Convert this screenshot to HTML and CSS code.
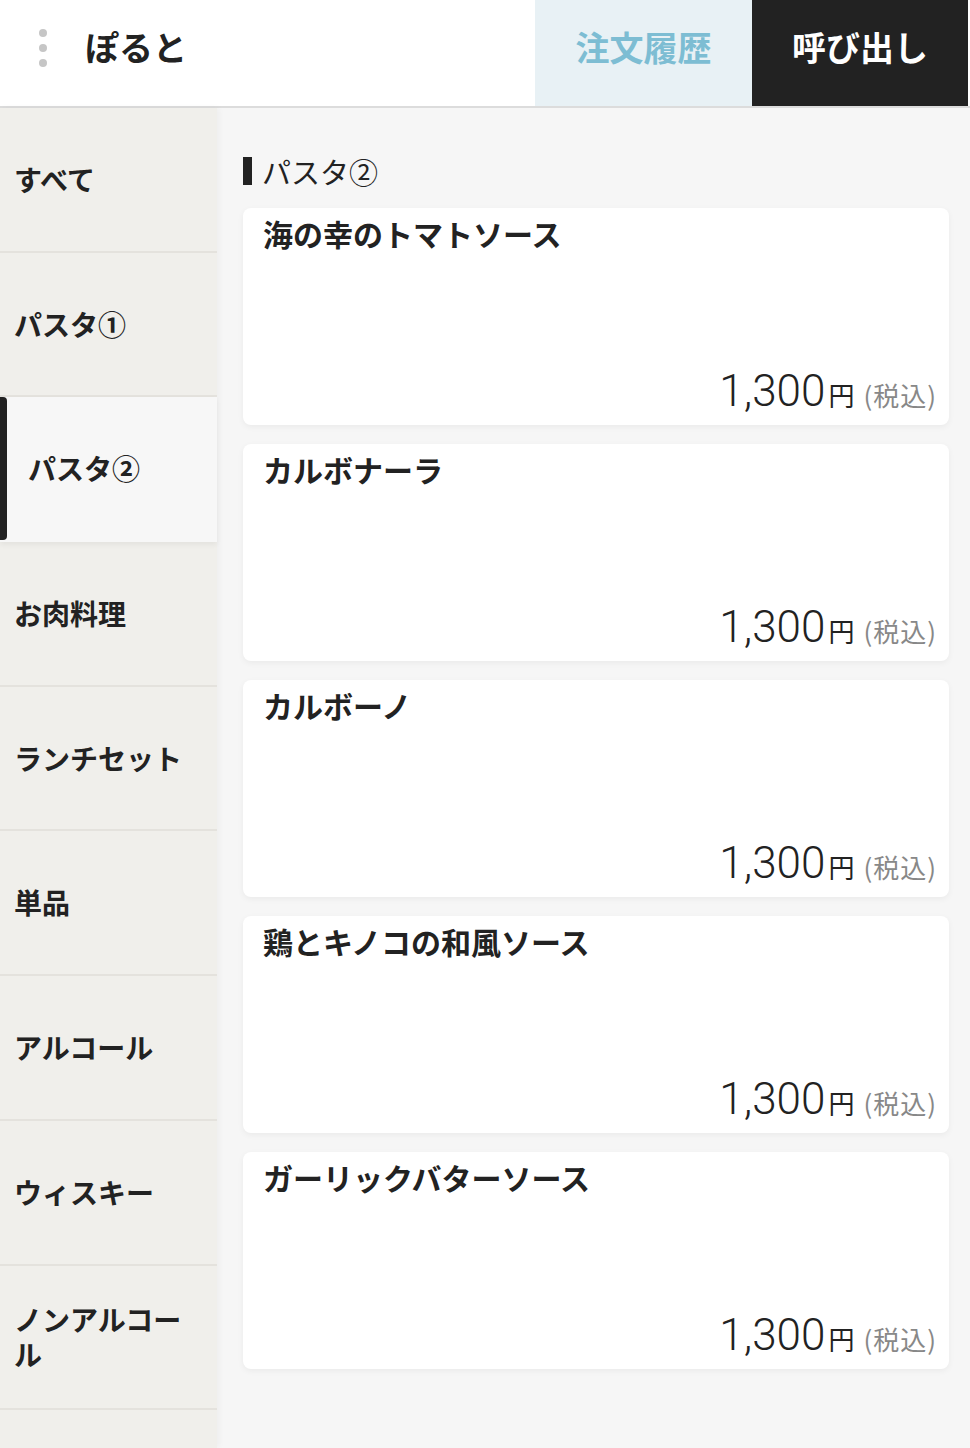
FILE: index.html
```html
<!DOCTYPE html>
<html lang="ja">
<head>
    <meta charset="UTF-8">
    <title>ぽると</title>
    <link rel="stylesheet" href="styles.css">
</head>
<body>
<div class="header">
    <div class="brand">
        <span class="dots"><i></i><i></i><i></i></span>
        <span class="shop">ぽると</span>
    </div>
    <div class="history">注文履歴</div>
    <div class="call">呼び出し</div>
</div>
<div class="page">
    <ul class="side">
        <li>すべて</li>
        <li>パスタ①</li>
        <li class="active">パスタ②</li>
        <li>お肉料理</li>
        <li>ランチセット</li>
        <li>単品</li>
        <li>アルコール</li>
        <li>ウィスキー</li>
        <li>ノンアルコール</li>
    </ul>
    <div class="main">
        <h2 class="cat">パスタ②</h2>
        <div class="card">
            <div class="name">海の幸のトマトソース</div>
            <div class="price"><span class="num">1,300</span><span class="yen">円</span><span class="tax">(税込)</span></div>
        </div>
        <div class="card">
            <div class="name">カルボナーラ</div>
            <div class="price"><span class="num">1,300</span><span class="yen">円</span><span class="tax">(税込)</span></div>
        </div>
        <div class="card">
            <div class="name">カルボーノ</div>
            <div class="price"><span class="num">1,300</span><span class="yen">円</span><span class="tax">(税込)</span></div>
        </div>
        <div class="card">
            <div class="name">鶏とキノコの和風ソース</div>
            <div class="price"><span class="num">1,300</span><span class="yen">円</span><span class="tax">(税込)</span></div>
        </div>
        <div class="card">
            <div class="name">ガーリックバターソース</div>
            <div class="price"><span class="num">1,300</span><span class="yen">円</span><span class="tax">(税込)</span></div>
        </div>
    </div>
</div>
</body>
</html>
```

FILE: styles.css
```css
*{
    margin: 0;
    padding: 0;
    box-sizing: border-box;
}
ul{
    list-style: none;
}
body{
    font-family: "Noto Sans CJK JP", "Noto Sans", sans-serif;
    color: #222;
    background: #f6f6f6;
}
.header{
    display: flex;
    height: 108px;
    padding-right: 2px;
    background: #fff;
    border-bottom: 2px solid #dcdcdc;
}
.brand{
    flex: 1;
    display: flex;
    align-items: center;
    padding: 0 0 14px 39px;
}
.dots{
    display: flex;
    flex-direction: column;
    gap: 7px;
    margin: 4px 38px 0 0;
}
.dots i{
    display: block;
    width: 8px;
    height: 8px;
    border-radius: 50%;
    background: #c6c6c6;
}
.shop{
    font-size: 34px;
    font-weight: 700;
}
.history,.call{
    display: flex;
    align-items: center;
    justify-content: center;
    padding-bottom: 14px;
    font-size: 34px;
    font-weight: 700;
}
.history{
    width: 217px;
    background: #e8f1f5;
    color: #7dbdd3;
}
.call{
    width: 216px;
    background: #222;
    color: #fff;
}
.page{
    display: grid;
    grid-template-columns: 217px 1fr;
    min-height: calc(100vh - 108px);
}
.side{
    background: #f0efeb;
    box-shadow: 2px 0 6px rgba(0,0,0,0.04);
    position: relative;
}
.side li{
    position: relative;
    display: flex;
    align-items: center;
    height: 144.7px;
    padding: 0 16px 0 14px;
    border-bottom: 2px solid #e4e2dd;
    font-size: 28px;
    font-weight: 700;
    line-height: 1.25;
}
.side li.active{
    background: #f7f7f7;
    padding-left: 28px;
    border-bottom-color: transparent;
    box-shadow: 0 3px 5px rgba(0,0,0,0.05);
    z-index: 1;
}
.side li.active::before{
    content: "";
    position: absolute;
    left: 0;
    top: 0;
    bottom: 0;
    width: 7px;
    border-radius: 0 4px 4px 0;
    background: #222;
}
.main{
    padding: 45px 21px 40px 26px;
}
.cat{
    display: flex;
    align-items: center;
    gap: 10px;
    font-size: 29px;
    font-weight: 400;
    line-height: 36px;
    margin-bottom: 19px;
}
.cat::before{
    content: "";
    width: 9px;
    height: 28px;
    background: #222;
}
.card{
    display: flex;
    flex-direction: column;
    height: 217px;
    margin-bottom: 19px;
    padding: 6px 12px 12px 20px;
    background: #fff;
    border-radius: 8px;
    box-shadow: 0 2px 6px rgba(0,0,0,0.05);
}
.name{
    font-size: 30px;
    font-weight: 700;
    line-height: 39px;
}
.price{
    margin-top: auto;
    display: flex;
    justify-content: flex-end;
    align-items: baseline;
    line-height: 1;
}
.num{
    font-family: Roboto, "Liberation Sans", sans-serif;
    font-weight: 300;
    font-size: 44px;
    color: #222;
}
.yen{
    font-size: 26px;
    margin-left: 3px;
}
.tax{
    font-size: 26px;
    color: #888;
    margin-left: 9px;
    letter-spacing: 1px;
}
```
